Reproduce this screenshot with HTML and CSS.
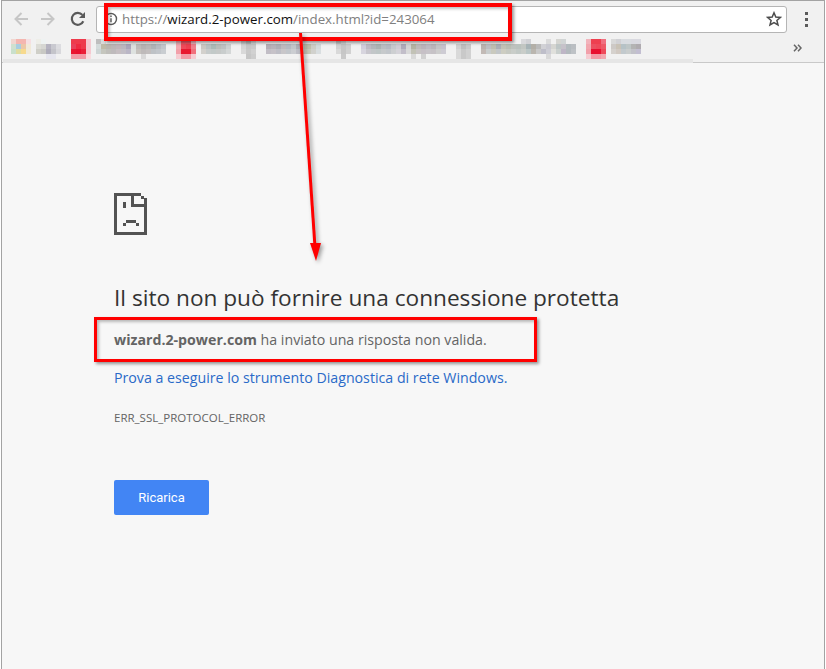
FILE: index.html
```html
<!DOCTYPE html>
<html lang="it">
<head>
<meta charset="utf-8">
<title>Il sito non può fornire una connessione protetta</title>
<link rel="stylesheet" href="styles.css">
</head>
<body>
<div class="window">
  <header class="chrome">
    <div class="toolbar">
      <svg class="nav-icon back" viewBox="0 0 16 16"><path d="M15 8H2.5M8.5 2 2.5 8l6 6"/></svg>
      <svg class="nav-icon forward" viewBox="0 0 16 16"><path d="M1 8h12.5M7.500 2l6 6-6 6"/></svg>
      <svg class="reload" viewBox="0 0 16 16"><path class="reload-arc" d="M13.300 10.300A6 6 0 1 1 12.400 3.900"/><path class="reload-head" d="M15 1v6H9z"/></svg>
      <div class="omnibox">
        <svg class="info" viewBox="0 0 14 14"><circle cx="7" cy="7" r="5.500"/><path d="M7 6.200v4M7 3.600v1.500"/></svg>
        <span class="url"><span class="dim">https://</span>wizard.2-power.com<span class="dim">/index.html?id=243064</span></span>
        <svg class="star" viewBox="0 0 16 16"><path d="M8 1.800 9.800 6l4.600.4-3.500 3 1.100 4.500L8 11.500l-4 2.400 1.100-4.500-3.500-3L6.200 6z"/></svg>
      </div>
      <div class="menu"><i></i><i></i><i></i></div>
    </div>
    <div class="bookmarks">
      <svg class="mosaic" width="693" height="30" viewBox="0 33 693 30">
        <rect class="band" x="3" y="59"/>
        <g>
          <rect x="11" y="39" fill="#f1d6d0"/><rect x="16" y="39" fill="#f4b6b0"/><rect x="21" y="39" fill="#f4b6b0"/><rect x="26" y="39" fill="#f5dfe2"/>
          <rect x="11" y="44" fill="#cfe0cf"/><rect x="16" y="44" fill="#a9cde0"/><rect x="21" y="44" fill="#ecc7a8"/><rect x="26" y="44" fill="#f1e9d8"/>
          <rect x="11" y="49" fill="#c9e0cc"/><rect x="16" y="49" fill="#e0dca0"/><rect x="21" y="49" fill="#f7da8e"/><rect x="26" y="49" fill="#f1ead8"/>
          <rect x="36" y="39" fill="#eeeee8"/><rect x="41" y="39" fill="#eef2f2"/>
          <rect x="36" y="44" fill="#dcdcd6"/><rect x="41" y="44" fill="#d6d6d2"/><rect x="46" y="44" fill="#b5b3c0"/><rect x="51" y="44" fill="#c9c9d0"/><rect x="56" y="44" fill="#dcdce0"/>
          <rect x="36" y="49" fill="#cfcfc8"/><rect x="41" y="49" fill="#c8c8c4"/><rect x="46" y="49" fill="#aeacba"/><rect x="51" y="49" fill="#c4c4ca"/><rect x="56" y="49" fill="#d8d8dc"/>
          <rect x="46" y="54" fill="#e6e6ee"/><rect x="51" y="54" fill="#e6e6ee"/>
        </g>
        <g>
          <rect x="71" y="39" fill="#ee3a4c"/><rect x="76" y="39" fill="#ee3a4c"/><rect x="81" y="39" fill="#ee3a4c"/><rect x="86" y="39" fill="#f5c9d0"/>
          <rect x="71" y="44" fill="#e9405a"/><rect x="76" y="44" fill="#ee2a40"/><rect x="81" y="44" fill="#ee3a4c"/><rect x="86" y="44" fill="#f5c9d0"/>
          <rect x="71" y="49" fill="#ea1530"/><rect x="76" y="49" fill="#e81030"/><rect x="81" y="49" fill="#ea1f38"/><rect x="86" y="49" fill="#f5c9d0"/>
          <rect x="71" y="54" fill="#f29aa6"/><rect x="76" y="54" fill="#f29aa6"/><rect x="81" y="54" fill="#f29aa6"/><rect x="86" y="54" fill="#f8dde0"/>
        </g>
        <g class="soft">
          <rect x="96" y="39" fill="#c8c8c8"/><rect x="101" y="39" fill="#e4e4e4"/>
          <rect x="96" y="44" fill="#dfe6e6"/><rect x="101" y="44" fill="#c9c4b0"/><rect x="106" y="44" fill="#c4c0b8"/><rect x="111" y="44" fill="#c6c0c0"/><rect x="116" y="44" fill="#cbbfc4"/><rect x="121" y="44" fill="#c5c0c8"/><rect x="126" y="44" fill="#b4aec4"/><rect x="131" y="44" fill="#e8ecea"/><rect x="136" y="44" fill="#c8c6c4"/><rect x="141" y="44" fill="#c0bcbc"/><rect x="146" y="44" fill="#c4c2c2"/><rect x="151" y="44" fill="#b8bcc0"/><rect x="156" y="44" fill="#c2c6cc"/><rect x="161" y="44" fill="#ccd0d6"/>
          <rect x="96" y="49" fill="#d8e0e0"/><rect x="101" y="49" fill="#cfd0c8"/><rect x="106" y="49" fill="#c9c8c4"/><rect x="111" y="49" fill="#c8c4c6"/><rect x="116" y="49" fill="#d0c8cc"/><rect x="121" y="49" fill="#ccc8d0"/><rect x="126" y="49" fill="#c4c0d0"/><rect x="131" y="49" fill="#eaeeec"/><rect x="136" y="49" fill="#d0ccc8"/><rect x="141" y="49" fill="#c8c4c4"/><rect x="146" y="49" fill="#ccc8c8"/><rect x="151" y="49" fill="#c8ccd0"/><rect x="156" y="49" fill="#ccd0d6"/><rect x="161" y="49" fill="#d4d8dc"/>
          <rect x="141" y="54" fill="#e4e4e4"/>
        </g>
        <g>
          <rect x="176" y="39" fill="#f2b4bc"/><rect x="181" y="39" fill="#ee5a68"/><rect x="186" y="39" fill="#ee5a68"/><rect x="191" y="39" fill="#f2b4bc"/>
          <rect x="176" y="44" fill="#f2a8b0"/><rect x="181" y="44" fill="#ee4a5a"/><rect x="186" y="44" fill="#ee4050"/><rect x="191" y="44" fill="#f0808c"/>
          <rect x="176" y="49" fill="#f2a0aa"/><rect x="181" y="49" fill="#e81830"/><rect x="186" y="49" fill="#e81830"/><rect x="191" y="49" fill="#f0707c"/>
          <rect x="176" y="54" fill="#f6ccd2"/><rect x="181" y="54" fill="#f29aa6"/><rect x="186" y="54" fill="#f29aa6"/><rect x="191" y="54" fill="#f6ccd2"/>
        </g>
        <g class="soft">
          <rect x="201" y="44" fill="#d6d2cc"/><rect x="206" y="44" fill="#c4cccc"/><rect x="211" y="44" fill="#b4c4c0"/><rect x="216" y="44" fill="#c4c8c4"/><rect x="221" y="44" fill="#c8cbcc"/><rect x="226" y="44" fill="#d8dcdc"/>
          <rect x="201" y="49" fill="#dedcd8"/><rect x="206" y="49" fill="#d0d6d6"/><rect x="211" y="49" fill="#ccd4d2"/><rect x="216" y="49" fill="#d0d4d2"/><rect x="221" y="49" fill="#d4d8d8"/><rect x="226" y="49" fill="#dfe2e2"/>
          <rect x="241" y="39" fill="#dcdcdc"/><rect x="246" y="39" fill="#c8c8c8"/><rect x="251" y="39" fill="#e8e8e8"/>
          <rect x="241" y="44" fill="#e0e0e0"/><rect x="246" y="44" fill="#d0d0d0"/><rect x="251" y="44" fill="#d4d4d4"/>
          <rect x="241" y="49" fill="#e4e4e4"/><rect x="246" y="49" fill="#d4d4d4"/><rect x="251" y="49" fill="#dcdcdc"/>
          <rect x="246" y="54" fill="#d0d0d0"/><rect x="251" y="54" fill="#d8d8d8"/>
        </g>
        <g class="soft">
          <rect x="266" y="44" fill="#bfb8c0"/><rect x="271" y="44" fill="#c2bcc4"/><rect x="276" y="44" fill="#b8b8c0"/><rect x="281" y="44" fill="#c8c4c8"/><rect x="286" y="44" fill="#c0c4cc"/><rect x="291" y="44" fill="#ccd0d4"/><rect x="296" y="44" fill="#b8b8c0"/><rect x="301" y="44" fill="#d0cec0"/><rect x="306" y="44" fill="#c8c8b4"/><rect x="311" y="44" fill="#d8d8d0"/><rect x="316" y="44" fill="#dfe6e8"/>
          <rect x="266" y="49" fill="#ccc8d0"/><rect x="271" y="49" fill="#d0ccd2"/><rect x="276" y="49" fill="#c8c8d0"/><rect x="281" y="49" fill="#d2d0d4"/><rect x="286" y="49" fill="#ccd0d6"/><rect x="291" y="49" fill="#d6d8dc"/><rect x="296" y="49" fill="#c8c8d0"/><rect x="301" y="49" fill="#d8d6cc"/><rect x="306" y="49" fill="#d2d2c4"/><rect x="311" y="49" fill="#dcdcd8"/><rect x="316" y="49" fill="#e4eaec"/>
        </g>
        <g class="soft">
          <rect x="336" y="39" fill="#d8d8d8"/><rect x="341" y="39" fill="#e8e8e8"/>
          <rect x="336" y="44" fill="#dcdcdc"/><rect x="341" y="44" fill="#d0d0d0"/><rect x="346" y="44" fill="#dadada"/>
          <rect x="336" y="49" fill="#e4e4e4"/><rect x="341" y="49" fill="#d0d0d0"/><rect x="346" y="49" fill="#dcdcdc"/>
          <rect x="341" y="54" fill="#d4d4d4"/>
        </g>
        <g class="soft">
          <rect x="361" y="44" fill="#dcd8e6"/><rect x="366" y="44" fill="#c8c4ce"/><rect x="371" y="44" fill="#bcc0c4"/><rect x="376" y="44" fill="#b4bcbc"/><rect x="381" y="44" fill="#c4c8cc"/><rect x="386" y="44" fill="#c0c4cc"/><rect x="391" y="44" fill="#d0d4d8"/><rect x="396" y="44" fill="#dcd8e0"/><rect x="401" y="44" fill="#b8b4c4"/><rect x="406" y="44" fill="#e0e0e0"/><rect x="411" y="44" fill="#bcbcac"/><rect x="416" y="44" fill="#c8c4c4"/><rect x="421" y="44" fill="#c4bcc4"/><rect x="426" y="44" fill="#c8c4cc"/><rect x="431" y="44" fill="#c4c0c4"/><rect x="436" y="44" fill="#cfcfd0"/><rect x="441" y="44" fill="#d0ccd8"/>
          <rect x="361" y="49" fill="#e2e0ea"/><rect x="366" y="49" fill="#d2d0d8"/><rect x="371" y="49" fill="#ccd0d2"/><rect x="376" y="49" fill="#c8d0d0"/><rect x="381" y="49" fill="#d0d4d6"/><rect x="386" y="49" fill="#ccd0d6"/><rect x="391" y="49" fill="#d8dadc"/><rect x="396" y="49" fill="#e0dee4"/><rect x="401" y="49" fill="#ccc8d4"/><rect x="406" y="49" fill="#e4e4e4"/><rect x="411" y="49" fill="#ccccc0"/><rect x="416" y="49" fill="#d2cece"/><rect x="421" y="49" fill="#d0cad0"/><rect x="426" y="49" fill="#d2ced4"/><rect x="431" y="49" fill="#d0ccd0"/><rect x="436" y="49" fill="#d8d8d8"/><rect x="441" y="49" fill="#d8d6de"/>
          <rect x="421" y="54" fill="#dcdcdc"/><rect x="411" y="54" fill="#e4e4e4"/>
        </g>
        <g class="soft">
          <rect x="456" y="44" fill="#dcdcdc"/><rect x="461" y="44" fill="#c8c8c8"/><rect x="466" y="44" fill="#d4d4d4"/>
          <rect x="456" y="49" fill="#e4e4e4"/><rect x="461" y="49" fill="#d4d4d4"/><rect x="466" y="49" fill="#dcdcdc"/>
          <rect x="461" y="54" fill="#d4d4d4"/><rect x="466" y="54" fill="#dcdcdc"/><rect x="456" y="54" fill="#e4e4e4"/>
        </g>
        <g class="soft">
          <rect x="481" y="44" fill="#c4bcb8"/><rect x="486" y="44" fill="#c8c8cc"/><rect x="491" y="44" fill="#c8c8b8"/><rect x="496" y="44" fill="#b4b8c0"/><rect x="501" y="44" fill="#ccccc0"/><rect x="506" y="44" fill="#c4c8bc"/><rect x="511" y="44" fill="#c8ccc8"/><rect x="516" y="44" fill="#c4ccc8"/><rect x="521" y="44" fill="#ccd0cc"/><rect x="526" y="44" fill="#b0bcc0"/><rect x="531" y="44" fill="#bcb8b0"/><rect x="536" y="44" fill="#c4c4c4"/><rect x="541" y="44" fill="#dcdce0"/><rect x="546" y="44" fill="#d4d4dc"/><rect x="551" y="44" fill="#e0e0dc"/><rect x="556" y="44" fill="#c8d0d0"/><rect x="561" y="44" fill="#d0ccd4"/><rect x="566" y="44" fill="#bcc4c8"/><rect x="571" y="44" fill="#c4c8cc"/>
          <rect x="481" y="49" fill="#ccc4c0"/><rect x="486" y="49" fill="#d4d8d8"/><rect x="491" y="49" fill="#d4d4c8"/><rect x="496" y="49" fill="#ccd0d4"/><rect x="501" y="49" fill="#d8d8cc"/><rect x="506" y="49" fill="#d0d4cc"/><rect x="511" y="49" fill="#d4d8d4"/><rect x="516" y="49" fill="#ccd4d0"/><rect x="521" y="49" fill="#d4d8d4"/><rect x="526" y="49" fill="#c4d0d0"/><rect x="531" y="49" fill="#c4c0b8"/><rect x="536" y="49" fill="#d4d4d4"/><rect x="541" y="49" fill="#c8c8d4"/><rect x="546" y="49" fill="#d8d8e0"/><rect x="551" y="49" fill="#ecece8"/><rect x="556" y="49" fill="#d4dad8"/><rect x="561" y="49" fill="#c8c0d0"/><rect x="566" y="49" fill="#bcc4c8"/><rect x="571" y="49" fill="#c8ccd0"/>
          <rect x="521" y="39" fill="#e4e4e8"/><rect x="526" y="39" fill="#dcdce0"/><rect x="546" y="39" fill="#e6e6e6"/><rect x="556" y="39" fill="#e0e0dc"/><rect x="561" y="39" fill="#dce0e0"/>
          <rect x="546" y="54" fill="#e4e4e4"/>
        </g>
        <g>
          <rect x="586" y="39" fill="#f2b4bc"/><rect x="591" y="39" fill="#ee4050"/><rect x="596" y="39" fill="#ee4050"/><rect x="601" y="39" fill="#f07080"/>
          <rect x="586" y="44" fill="#f2a8b0"/><rect x="591" y="44" fill="#ec5060"/><rect x="596" y="44" fill="#ee4a5a"/><rect x="601" y="44" fill="#ee5a68"/>
          <rect x="586" y="49" fill="#f2a0aa"/><rect x="591" y="49" fill="#e81030"/><rect x="596" y="49" fill="#e81030"/><rect x="601" y="49" fill="#ee4a5a"/>
          <rect x="586" y="54" fill="#f6ccd2"/><rect x="591" y="54" fill="#f29aa6"/><rect x="596" y="54" fill="#f29aa6"/><rect x="601" y="54" fill="#f2a8b0"/>
        </g>
        <g class="soft">
          <rect x="611" y="39" fill="#e4e4e4"/><rect x="616" y="39" fill="#dcdce0"/><rect x="621" y="39" fill="#e4e8ec"/><rect x="626" y="39" fill="#e4e8ec"/><rect x="631" y="39" fill="#e4e4ec"/><rect x="636" y="39" fill="#e4e4ec"/>
          <rect x="611" y="44" fill="#d8d4d0"/><rect x="616" y="44" fill="#d4ccc0"/><rect x="621" y="44" fill="#c0ccd0"/><rect x="626" y="44" fill="#c8d0d0"/><rect x="631" y="44" fill="#bcbcbc"/><rect x="636" y="44" fill="#b8b4b8"/>
          <rect x="611" y="49" fill="#e0dcd8"/><rect x="616" y="49" fill="#dcd4cc"/><rect x="621" y="49" fill="#ccd4d8"/><rect x="626" y="49" fill="#d4d8d8"/><rect x="631" y="49" fill="#ccccd4"/><rect x="636" y="49" fill="#ccc8dc"/>
        </g>
      </svg>
      <svg class="chevrons" viewBox="0 0 9 8"><path d="M1 .8 4 4 1 7.200M5 .8 8 4 5 7.200"/></svg>
    </div>
  </header>
  <main class="page">
    <div class="error">
      <svg class="sad" width="33" height="42" viewBox="0 0 33 42">
        <rect x="0" y="0" width="3" height="42"/><rect x="0" y="0" width="27" height="3"/><rect x="0" y="39" width="33" height="3"/><rect x="30" y="8" width="3" height="34"/>
        <rect x="27" y="3" width="3" height="3"/><rect x="30" y="5" width="3" height="3"/>
        <rect x="17" y="0" width="3" height="14"/><rect x="17" y="11" width="16" height="3"/>
        <rect x="9" y="9" width="3" height="6"/>
        <rect x="12" y="27" width="10" height="3"/><rect x="9" y="30" width="3" height="2.500"/><rect x="22" y="30" width="3" height="2.500"/>
      </svg>
      <h1 class="title">Il sito non può fornire una connessione protetta</h1>
      <p class="message"><strong>wizard.2-power.com</strong> ha inviato una risposta non valida.</p>
      <p class="advice"><a href="#">Prova a eseguire lo strumento Diagnostica di rete Windows.</a></p>
      <p class="code">ERR_SSL_PROTOCOL_ERROR</p>
      <button class="reload-btn" type="button">Ricarica</button>
    </div>
  </main>
  <div class="callout callout-url"></div>
  <div class="callout callout-msg"></div>
  <svg class="arrow" width="826" height="300" viewBox="0 0 826 300"><path class="arrow-line" d="M300.500 33 314.800 244"/><path class="arrow-head" d="M310 243h11l-5 18z"/></svg>
</div>
</body>
</html>
```

FILE: styles.css
```css
html, body {
  margin: 0;
  padding: 0;
  height: 100%;
  background: #fff;
  overflow: hidden;
}
.window {
  position: relative;
  margin: 0 1px;
  height: 669px;
  box-sizing: border-box;
  border-left: 1px solid #a3a3a3;
  border-right: 1px solid #a3a3a3;
  display: flex;
  flex-direction: column;
  font-family: "Open Sans", sans-serif;
  background: #f7f7f7;
}
.chrome {
  background: #f1f1f1;
  border-top: 1px solid #a3a3a3;
  height: 63px;
  flex: none;
  box-sizing: border-box;
}
.toolbar {
  display: flex;
  align-items: center;
  height: 32px;
  box-sizing: border-box;
  padding-top: 4px;
}
.nav-icon {
  width: 16px;
  height: 16px;
  fill: none;
  stroke: #c6c6c6;
  stroke-width: 2;
  flex: none;
}
.back { margin-left: 11px; margin-right: 11px; }
.forward { margin-right: 13px; }
.reload { width: 16px; height: 16px; flex: none; margin-right: 10px; margin-left: 1px; }
.reload-arc { fill: none; stroke: #5a5a5a; stroke-width: 2.200; }
.reload-head { fill: #5a5a5a; }
.omnibox {
  flex: none;
  width: 691px;
  height: 27px;
  box-sizing: border-box;
  background: #fff;
  border: 1px solid #b5b5b5;
  border-radius: 3px;
  display: flex;
  align-items: center;
  padding-left: 7px;
  padding-right: 4px;
}
.info {
  width: 14px;
  height: 14px;
  flex: none;
  fill: none;
  stroke: #5a5a5a;
  stroke-width: 1.400;
  margin-right: 4px;
}
.url {
  flex: 1;
  font-size: 13.300px;
  color: #111;
  white-space: nowrap;
}
.dim { color: #808080; }
.star {
  width: 16px;
  height: 16px;
  flex: none;
  fill: none;
  stroke: #4c4c4c;
  stroke-width: 1.500;
}
.menu {
  margin-left: 18px;
  display: flex;
  flex-direction: column;
  gap: 3px;
  margin-top: 1px;
}
.menu i {
  display: block;
  width: 3px;
  height: 3px;
  background: #5a5a5a;
}
.bookmarks {
  position: relative;
  height: 30px;
  display: flex;
  align-items: flex-start;
  border-bottom: 1px solid #c9c9c9;
  box-sizing: border-box;
}
.mosaic {
  flex: none;
  margin-left: -2px;
  display: block;
}
.mosaic rect { width: 5px; height: 5px; }
.mosaic .band { width: 690px; height: 4px; fill: #e6e6e6; }
.mosaic .soft { filter: brightness(.95); }
.chevrons {
  width: 9px;
  height: 8px;
  flex: none;
  margin-left: 100px;
  margin-top: 11px;
  fill: none;
  stroke: #666;
  stroke-width: 1.500;
}
.page {
  flex: 1;
  background: #f7f7f7;
}
.error {
  padding: 130px 0 0 112px;
}
.sad {
  display: block;
  fill: #535353;
  shape-rendering: crispEdges;
}
.title {
  margin: 48px 0 0;
  font-size: 22.650px;
  line-height: 30px;
  font-weight: 400;
  color: #333;
}
.message {
  margin: 17px 0 0;
  font-size: 14.200px;
  line-height: 20px;
  color: #646464;
}
.message strong { font-weight: 700; }
.advice {
  margin: 18px 0 0;
  font-size: 14.200px;
  line-height: 20px;
}
.advice a {
  color: #2a6ac8;
  text-decoration: none;
}
.code {
  margin: 21px 0 0;
  font-size: 11.500px;
  line-height: 18px;
  color: #646464;
}
.reload-btn {
  display: block;
  margin-top: 53px;
  width: 95px;
  height: 35px;
  border: 0;
  border-radius: 2px;
  background: #4285f4;
  color: #fff;
  font-family: Roboto, sans-serif;
  font-size: 13px;
  padding: 0;
}
.callout {
  position: absolute;
  box-sizing: border-box;
  border: 4px solid #f00;
  box-shadow: 2px 2px 3px rgba(0,0,0,.4), inset 2px 2px 3px rgba(0,0,0,.25);
}
.callout-url { left: 102px; top: 3px; width: 408px; height: 38px; }
.callout-msg { left: 92px; top: 317px; width: 443px; height: 45px; border-width: 3px; }
.arrow {
  position: absolute;
  left: -2px;
  top: 0;
  filter: drop-shadow(2px 2px 2px rgba(0,0,0,.4));
}
.arrow-line { stroke: #f00; stroke-width: 3; fill: none; }
.arrow-head { fill: #f00; }
```
